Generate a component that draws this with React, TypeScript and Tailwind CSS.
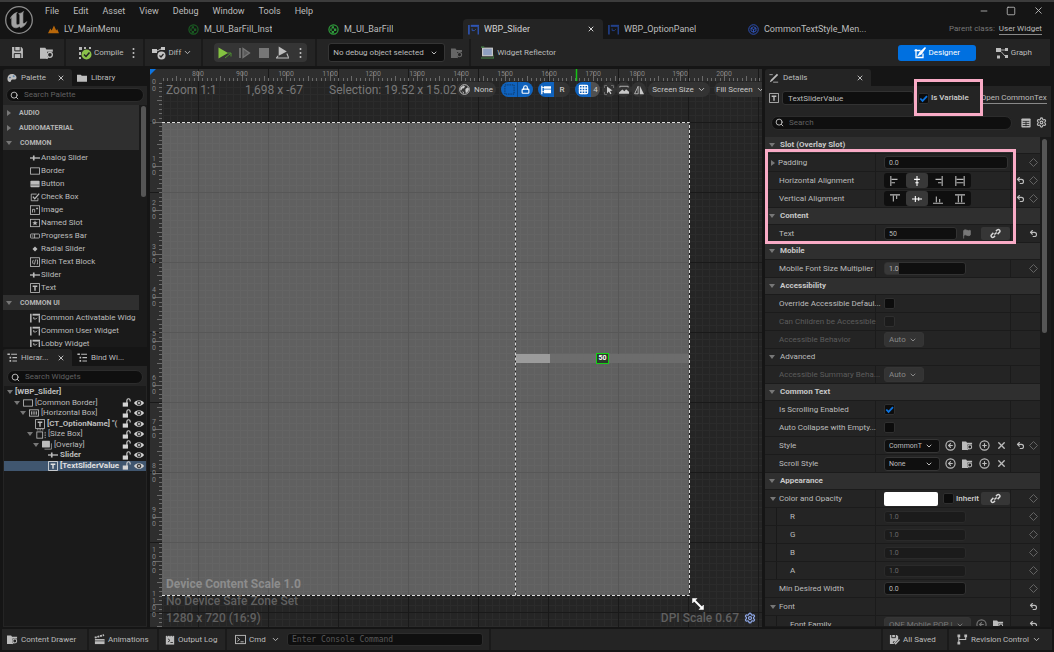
import React, { useState } from 'react';
import {
  ChevronDown,
  CircleArrowLeft,
  CirclePlus,
  Flag,
  Grid3x3,
  Link,
  Lock,
  Minus,
  Search,
  Settings,
  Square,
  Undo2,
  X,
} from 'lucide-react';

interface IconProps {
  className?: string;
  children: React.ReactNode;
}

// Shared 12x12 canvas for the hand-drawn editor icons
function Glyph({ className = 'size-3', children }: IconProps) {
  return (
    <svg viewBox="0 0 12 12" className={`shrink-0 ${className}`} fill="none" stroke="currentColor" aria-hidden="true">
      {children}
    </svg>
  );
}

const glyphs = {
  slider: (
    <>
      <path d="M0 6h12" strokeWidth="1.6" />
      <path d="M4.5 3v6" strokeWidth="2" />
    </>
  ),
  border: <rect x="0.7" y="2.2" width="10.6" height="7.6" />,
  button: (
    <>
      <rect x="0.5" y="2" width="11" height="8" rx="1" fill="currentColor" stroke="none" />
      <path d="M0.5 7.2h11" stroke="#555" />
    </>
  ),
  check: (
    <>
      <path d="M8 2.5H1.5v8h8V7" />
      <path d="M3.5 5.5l2.2 2.7L11 2" strokeWidth="1.6" />
    </>
  ),
  image: (
    <>
      <rect x="0.6" y="0.9" width="10.8" height="10.4" />
      <path d="M3 9V5.2h2.6V9M8.5 3v2.4M7.3 4.2h2.4" />
    </>
  ),
  slot: (
    <>
      <rect x="0.6" y="1.6" width="10.8" height="8.8" />
      <path
        d="M6 2.800l.9 2.200 2.400.1-1.900 1.400.7 2.300L6 7.500 3.900 8.800l.7-2.300-1.900-1.400L5.100 5z"
        fill="currentColor"
        stroke="none"
      />
    </>
  ),
  progress: (
    <>
      <rect x="0.5" y="3.6" width="11" height="4.8" rx="1" />
      <path d="M5.5 3.6v4.8M2 6h2" />
    </>
  ),
  radial: <path d="M6 3L9 6 6 9 3 6z" fill="currentColor" stroke="none" />,
  rich: (
    <>
      <rect x="0.6" y="0.9" width="10.8" height="10.4" />
      <path d="M4 3.5L3 6l1 2.5M6.7 3L5.3 9M8 3.5h1v5H8" />
    </>
  ),
  text: (
    <>
      <rect x="0.7" y="0.7" width="10.6" height="10.6" />
      <path d="M3.2 3.8h5.6M6 3.8v5.4" strokeWidth="1.700" />
    </>
  ),
  widget: (
    <>
      <path d="M1 1v10.500" strokeWidth="1.800" />
      <path d="M3 2H12" strokeWidth="2.200" />
      <path d="M11.200 3v8.500" strokeWidth="1.500" />
      <path d="M4.500 4.800v2.400h2.500l1.500-1.500" />
    </>
  ),
  hbox: (
    <>
      <rect x="0.6" y="2.2" width="10.8" height="7.6" />
      <path d="M3 4v4M5 4v4M7 4v4M9 4v4" />
    </>
  ),
  sizebox: (
    <>
      <rect x="1" y="3.5" width="7" height="7.5" />
      <path d="M1 1h8M11 3.500V11" strokeDasharray="2 1" />
    </>
  ),
  overlay: (
    <>
      <rect x="0" y="1" width="9.5" height="8" rx="0.5" fill="currentColor" stroke="none" />
      <path d="M11.3 4v7H3" strokeWidth="0.8" />
    </>
  ),
  tree: (
    <>
      <path d="M0.5 1.500h3M3 5.500h2M3 9.500h2" strokeWidth="2" />
      <path d="M5 1.500h7M6.500 5.500H12M6.500 9.500H12" strokeWidth="1.300" />
    </>
  ),
  folder: <path d="M0 2h4.500l1.200 1.300H12V10.500H0z" fill="currentColor" stroke="none" />,
  browse: (
    <>
      <path d="M0 1.500h4.500l1 1.500H11v2H6v6H0z" fill="currentColor" stroke="none" />
      <circle cx="8.5" cy="7.6" r="2.1" strokeWidth="1.100" />
      <path d="M7 9.300l-1.300 1.600" strokeWidth="1.300" />
    </>
  ),
  save: (
    <>
      <path d="M1 1h8.500L11 2.500V11H1z" fill="currentColor" stroke="none" />
      <path d="M3.500 1v3.500h5V1M3 11V7h6v4" stroke="#242424" strokeWidth="0.900" />
    </>
  ),
  saved: (
    <>
      <path d="M1 1h7.500L10 2.500V6L7 9 5.500 7.500 4 9l2 2H1z" fill="currentColor" stroke="none" />
      <path d="M3 1v3h4V1" stroke="#242424" />
      <path d="M5.500 8.700l1.800 1.900L11.500 6" strokeWidth="1.400" />
    </>
  ),
  pencil: (
    <>
      <path d="M2 8.500L9.500 1l1.500 1.500L3.500 10 1 11z" fill="currentColor" stroke="none" />
      <path d="M5 11h6M0.500 2h4" />
    </>
  ),
  palette: (
    <>
      <path
        d="M6 1.200C2.800 1.200.5 3.700.5 6.800c0 2.500 1.500 4 3 4 1.800 0 .9-2 2.200-2.700 1.600-.9 5.300.9 5.700-2C11.800 3.200 9 1.200 6 1.200z"
        fill="currentColor"
        stroke="none"
      />
      <circle cx="3.5" cy="5.5" r="1" fill="#3a5f86" stroke="none" />
      <circle cx="8" cy="4" r="1.2" fill="#5d88b0" stroke="none" />
    </>
  ),
  graph: (
    <>
      <path d="M0 1h5v4H0zM9 1h3v3H9zM9 8h3v3H9zM1 8.500h3v3H1z" fill="currentColor" stroke="none" />
      <path d="M5 3h4M5 4.500L9 9" strokeWidth="0.900" />
    </>
  ),
  designer: (
    <>
      <path d="M0.500 3.500h6M2 2v8.500h7V6.500" strokeWidth="1.300" />
      <path d="M3 9.500L5.500 5 11 0l1 1-4.500 6.500z" fill="currentColor" stroke="none" />
    </>
  ),
  mountain: <path d="M0 10L2.500 5l1.500 2L6.500 1.500 9 7l1-1.500L12 10z" fill="currentColor" stroke="none" />,
  material: (
    <>
      <circle cx="6" cy="6" r="5" strokeWidth="1.300" />
      <path d="M4 2.500h2.500V5H4zM6.500 5H9v2.500H6.500zM2.500 5H4v2.500H2.500zM4 7.500h2.500V10H4z" fill="currentColor" stroke="none" />
    </>
  ),
  style: (
    <>
      <circle cx="6" cy="6" r="5.2" />
      <path d="M6 3l2.700 1.400v3.200L6 9 3.300 7.600V4.400zM6 6v3M6 6l2.700-1.500M6 6L3.300 4.500" />
    </>
  ),
  clapper: (
    <>
      <path d="M1 5.500h10.500V11H1z" fill="currentColor" stroke="none" />
      <path d="M0.800 4L11 1.200" strokeWidth="2" strokeDasharray="2.200 0.800" />
      <path d="M1 7.500h10.500" stroke="#242424" strokeWidth="0.700" />
    </>
  ),
  log: (
    <>
      <path d="M1 1h10v10.500H1z" fill="currentColor" stroke="none" />
      <path d="M3.500 4.500L6 6.500l-2.500 2M6.500 9h3" stroke="#242424" />
      <path d="M3 0v2M6 0v2M9 0v2" stroke="#242424" strokeWidth="0.700" />
    </>
  ),
  cmd: (
    <>
      <rect x="0.6" y="1.5" width="10.8" height="9" />
      <path d="M2.500 4L5 6 2.500 8M6 8.500h3.500" />
    </>
  ),
  branch: (
    <>
      <path d="M0.500 0.500h3v3h-3zM0.500 8.500h3v3h-3zM8 0.500h3v3H8z" fill="currentColor" stroke="none" />
      <path d="M2 3v6M9.500 3v3H2" strokeWidth="1.200" />
    </>
  ),
  reflector: (
    <>
      <rect x="1.5" y="2" width="9" height="7" fill="#8f9fc0" stroke="#d0d0d0" />
      <path d="M0 1h3M0 11h12M12 8v3" stroke="#4c8a4c" />
    </>
  ),
  table: (
    <>
      <rect x="0.5" y="0.5" width="11" height="11" rx="1" fill="currentColor" stroke="none" />
      <path d="M2 4h8M2 6.500h8M2 9h8M6 4v6" stroke="#242424" />
    </>
  ),
  mountainFrame: (
    <>
      <path d="M1 3V1.500h10V3" />
      <path d="M0 10.500h12V8L8.500 5 6.500 7.500 4 5.500 0 9z" fill="currentColor" stroke="none" />
    </>
  ),
  mirror: (
    <>
      <path d="M5 1.500V10.500H0.700z" />
      <path d="M7 1v10h5z" fill="currentColor" stroke="none" />
    </>
  ),
  pointer: (
    <>
      <path d="M1.500 4V1.500H4M8 1.500h2.500V4M1.500 8v2.500H4" stroke="#777" strokeWidth="0.800" />
      <path d="M4 2.500l5.500 4-2.500.5 1.500 2.500-1.200.7-1.400-2.600L4 9.500z" fill="currentColor" stroke="none" />
    </>
  ),
  outline: <rect x="1" y="1" width="10" height="10" stroke="#12335a" strokeDasharray="1.500 1" />,
  localize: (
    <>
      <path d="M3.500 1.500H12v3H3.500zM3.500 5.500H12V10H3.500z" fill="currentColor" stroke="none" />
      <path d="M1 1v10" strokeWidth="1.500" />
      <path d="M1 3h3M1 8h3" />
    </>
  ),
  unlocked: (
    <>
      <path d="M1 6h7v5.500H1z" fill="currentColor" stroke="none" />
      <path d="M6.500 6.500V3.200a2.200 2.200 0 0 1 4.400 0v1.600" strokeWidth="1.500" />
    </>
  ),
  eye: (
    <>
      <path d="M0 6C2.500 1.500 9.500 1.500 12 6 9.500 10.500 2.500 10.500 0 6z" fill="currentColor" stroke="none" />
      <circle cx="6" cy="6" r="2.2" fill="#aaa" stroke="#1a1a1a" strokeWidth="1.100" />
    </>
  ),
  globe: (
    <>
      <circle cx="6" cy="6" r="5.3" />
      <path
        d="M2 3.500l3-2 1.500 1-1 2-2 .5L2.500 7 1.200 6zM7 5.500l2.500-2L11 5.500 9.500 8.500 7.500 10 7 7.500zM3.500 8l1.800.7L5 11z"
        fill="currentColor"
        stroke="none"
      />
    </>
  ),
};

type GlyphName = keyof typeof glyphs;

const CARET = 'size-0 shrink-0 border-transparent';

function Caret({ open = true }: { open?: boolean }) {
  return open ? (
    <span className={`${CARET} border-x-[3px] border-t-[4px] border-t-[#777]`} />
  ) : (
    <span className={`${CARET} ml-px border-y-[3px] border-l-[4px] border-l-[#777]`} />
  );
}

function Dots() {
  return (
    <svg viewBox="0 0 3 12" className="h-3 w-[3px]" fill="#c4c4c4" aria-hidden="true">
      <circle cx="1.5" cy="2" r="1" />
      <circle cx="1.5" cy="6" r="1" />
      <circle cx="1.5" cy="10" r="1" />
    </svg>
  );
}

interface CheckProps {
  label: string;
  defaultChecked?: boolean;
  disabled?: boolean;
  showLabel?: boolean;
}

function Check({ label, defaultChecked, disabled, showLabel }: CheckProps) {
  return (
    <label className="flex shrink-0 items-center gap-[2px]">
      <span className="grid">
        <input
          type="checkbox"
          aria-label={label}
          defaultChecked={defaultChecked}
          disabled={disabled}
          className="peer col-start-1 row-start-1 size-[11px] appearance-none rounded-[2px] border border-[#2f2f2f] bg-[#0c0c0c] disabled:bg-[#1b1b1b]"
        />
        <svg
          viewBox="0 0 12 12"
          className="invisible col-start-1 row-start-1 size-[11px] peer-checked:visible"
          fill="none"
          stroke="#0d74e0"
          strokeWidth="2"
          aria-hidden="true"
        >
          <path d="M2.500 6l2.500 2.700L9.800 3.500" />
        </svg>
      </span>
      {showLabel && <span className="font-medium text-[#d0d0d0]">{label}</span>}
    </label>
  );
}

interface DropProps {
  label: string;
  value: string;
  className: string;
  disabled?: boolean;
}

function Drop({ label, value, className, disabled }: DropProps) {
  return (
    <span className={`grid shrink-0 items-center rounded-[3px] border border-[#353535] ${className}`}>
      <select
        aria-label={label}
        disabled={disabled}
        className="col-start-1 row-start-1 w-full appearance-none pl-[4px] whitespace-nowrap outline-none"
      >
        <option>{value}</option>
      </select>
      <ChevronDown className="pointer-events-none col-start-1 row-start-1 mr-[6px] size-2 justify-self-end" strokeWidth={3} />
    </span>
  );
}

function SearchBox({ label, className }: { label: string; className: string }) {
  return (
    <label className={`flex h-[14px] items-center gap-[5px] rounded-full border border-[#2c2c2c] bg-[#0f0f0f] px-[3px] ${className}`}>
      <Search className="size-[9px] shrink-0 text-[#c0c0c0]" strokeWidth={2.5} />
      <input
        type="search"
        aria-label={label}
        placeholder={label}
        className="w-full min-w-0 bg-transparent outline-none placeholder:text-[#606060]"
      />
    </label>
  );
}

const menus = ['File', 'Edit', 'Asset', 'View', 'Debug', 'Window', 'Tools', 'Help'];

const documents: { name: string; icon: GlyphName; color: string; active?: boolean }[] = [
  { name: 'LV_MainMenu', icon: 'mountain', color: 'text-[#b8670a]' },
  { name: 'M_UI_BarFill_Inst', icon: 'material', color: 'text-[#1a5c22]' },
  { name: 'M_UI_BarFill', icon: 'material', color: 'text-[#2f9e3c]' },
  { name: 'WBP_Slider', icon: 'widget', color: 'text-[#2f55b4]', active: true },
  { name: 'WBP_OptionPanel', icon: 'widget', color: 'text-[#22408a]' },
  { name: 'CommonTextStyle_Men...', icon: 'style', color: 'text-[#2f55c4]' },
];

function TitleBar() {
  return (
    <header className="flex h-[39px] shrink-0 border-t-2 border-[#3c3c3c] bg-[#151515] text-[9px]">
      <svg viewBox="0 0 30 30" className="mt-[3px] ml-1 size-[30px] shrink-0" aria-label="Unreal Engine">
        <circle cx="15" cy="15" r="13.3" fill="#101010" stroke="#8c8c8c" strokeWidth="1.300" />
        <path
          d="M6.500 13.500c1-3 3.500-5.300 6.800-6.200-.9.800-1.100 1.400-1.100 2.200v8.300c0 1.500.6 2 1.500 2 .8 0 1.500-.5 2.100-1.100V10c0-.8-.4-1.100-1.200-1.300 2-.3 3.700-1 5-2.200-.6 1-.7 1.600-.7 2.500v8.200c0 1 .5 1.300 1.100 1.300.9 0 1.900-.8 2.700-1.900-.9 3.300-3.200 5.400-6.200 6.200l-1.100-1.500c-1 1-2.200 1.600-3.700 1.500-2.500-.2-4-1.500-4-4v-6c0-.9-.4-1-1.200.7z"
          fill="#a0a0a0"
          stroke="#a0a0a0"
          strokeWidth="0.600"
        />
      </svg>
      <div className="flex min-w-0 flex-1 flex-col pl-[9px]">
        <div className="flex h-[17px] items-center">
          <nav className="flex gap-[14px] pl-[2px]">
            {menus.map((m) => (
              <button key={m}>{m}</button>
            ))}
          </nav>
          <div className="ml-auto flex gap-[17px] pr-[10px]">
            <button aria-label="Minimize">
              <Minus className="size-[10px]" />
            </button>
            <button aria-label="Maximize">
              <Square className="size-[10px]" />
            </button>
            <button aria-label="Close">
              <X className="size-[11px]" />
            </button>
          </div>
        </div>
        <div className="flex min-h-0 flex-1 items-stretch">
          {documents.map((d) => (
            <div
              key={d.name}
              className={`flex w-[140px] shrink items-center rounded-t-[4px] pl-[5px] ${d.active ? 'bg-[#242424] text-[#d4d4d4]' : ''}`}
            >
              <button className="flex min-w-0 items-center gap-[5px]">
                <Glyph className={`size-[11px] ${d.color}`}>{glyphs[d.icon]}</Glyph>
                <span className="truncate">{d.name}</span>
              </button>
              {d.active && (
                <button aria-label="Close tab" className="mr-2 ml-auto">
                  <X className="size-2" strokeWidth={3} />
                </button>
              )}
            </div>
          ))}
          <div className="ml-auto flex shrink-0 items-center gap-1 pr-3 text-[8px]">
            <span className="text-[#777]">Parent class:</span>
            <a href="#parent" className="border-b border-[#888] leading-[10px]">
              User Widget
            </a>
          </div>
        </div>
      </div>
    </header>
  );
}

function Divider() {
  return <span className="h-full w-[2px] shrink-0 bg-[#1a1a1a]" />;
}

function Toolbar() {
  return (
    <div className="mr-1 flex h-[27px] shrink-0 items-center bg-[#242424]">
      <button aria-label="Save" className="ml-[11px]">
        <Glyph className="size-[13px]">{glyphs.save}</Glyph>
      </button>
      <button aria-label="Browse" className="mr-[10px] ml-4">
        <Glyph className="size-[14px]">{glyphs.browse}</Glyph>
      </button>
      <Divider />
      <button className="ml-3 flex items-center gap-[2px]">
        <svg viewBox="0 0 14 14" className="size-[14px]" aria-hidden="true">
          <path d="M1 1h3v3H1zM6 1h2v2H6zM11 1h2v2h-2zM1 6h2v3H1zM1 11h2v2H1z" fill="#b5b5b5" />
          <circle cx="8.5" cy="8.5" r="5" fill="#8bc24a" />
          <path d="M6 8.500l2 2 3.500-4" fill="none" stroke="#242424" strokeWidth="1.500" />
        </svg>
        Compile
      </button>
      <button aria-label="Compile options" className="mr-[8px] ml-[9px]">
        <Dots />
      </button>
      <Divider />
      <button className="mr-[9px] ml-[7px] flex items-center gap-[2px]">
        <svg viewBox="0 0 14 14" className="size-[14px]" fill="#c4c4c4" aria-hidden="true">
          <path d="M0 3h5v4H0zM9 1h4v3H9z" />
          <path d="M5 5l4-2" stroke="#c4c4c4" />
          <circle cx="9.5" cy="9.5" r="4" />
          <path d="M7.500 9.500l1.500 1.500 2.500-3" fill="none" stroke="#242424" strokeWidth="1.200" />
        </svg>
        Diff
        <ChevronDown className="size-[9px]" strokeWidth={2.5} />
      </button>
      <Divider />
      <div className="mr-[8px] ml-[11px] flex h-[19px] shrink-0 items-center rounded-[4px] bg-[#353535] pr-[5px] pl-[4px]">
        <button aria-label="Play">
          <svg viewBox="0 0 14 12" className="h-3 w-[14px]" aria-hidden="true">
            <path d="M0.500 0.500L10 6 0.500 11.500z" fill="#84c341" />
            <path d="M7 11l5.500-4.500M9.500 6h3.500v3.500" fill="none" stroke="#4f9130" />
          </svg>
        </button>
        <button aria-label="Step" className="ml-[7px]">
          <Glyph className="size-3 text-[#777]">
            <path d="M1 1v10" strokeWidth="1.700" />
            <path d="M4 1.500v9l6.500-4.500z" fill="#5a5a5a" strokeWidth="1.300" />
          </Glyph>
        </button>
        <button aria-label="Stop" className="ml-[8px] size-[10px] bg-[#777]" />
        <button aria-label="Eject" className="ml-[7px]">
          <Glyph className="size-[13px] text-[#bdbdbd]">
            <path d="M2.500 0.500L10 5 2.500 9z" fill="currentColor" stroke="none" />
            <path d="M0 11h12M2 9l-1.500 2M10 7l1.500 3.500" />
          </Glyph>
        </button>
        <button aria-label="Play options" className="ml-[10px]">
          <Dots />
        </button>
      </div>
      <Divider />
      <Drop label="Debug object" value="No debug object selected" className="ml-[11px] h-[19px] w-[117px] bg-[#0f0f0f]" />
      <button aria-label="Browse debug object" className="mx-[6px]">
        <Glyph className="size-3 text-[#666]">{glyphs.browse}</Glyph>
      </button>
      <Divider />
      <button className="ml-[10px] flex items-center gap-[3px] whitespace-nowrap">
        <Glyph className="size-[13px]">{glyphs.reflector}</Glyph>
        Widget Reflector
      </button>
      <button className="ml-auto flex h-[16px] w-[78px] shrink-0 items-center justify-center gap-[3px] rounded-[3px] bg-[#0070e0] text-white">
        <Glyph className="size-3">{glyphs.designer}</Glyph>
        Designer
      </button>
      <button className="mr-[18px] ml-5 flex items-center gap-[3px]">
        <Glyph className="size-3">{glyphs.graph}</Glyph>
        Graph
      </button>
    </div>
  );
}

interface PanelTabsProps {
  active: string;
  icon: GlyphName;
  other?: string;
  otherIcon?: GlyphName;
  width: string;
}

function PanelTabs({ active, icon, other, otherIcon, width }: PanelTabsProps) {
  return (
    <div className="flex h-[17px] shrink-0 bg-[#151515]">
      <div className={`flex items-center rounded-t-[3px] bg-[#242424] pl-1 ${width}`}>
        <button className="flex items-center gap-[4px]">
          <Glyph className="size-[10px]">{glyphs[icon]}</Glyph>
          {active}
        </button>
        <button aria-label={`Close ${active}`} className="mr-[7px] ml-auto">
          <X className="size-2" strokeWidth={3} />
        </button>
      </div>
      {other && otherIcon && (
        <button className="ml-[5px] flex items-center gap-[4px]">
          <Glyph className="size-[10px]">{glyphs[otherIcon]}</Glyph>
          {other}
        </button>
      )}
    </div>
  );
}

const commonItems: { name: string; icon: GlyphName }[] = [
  { name: 'Analog Slider', icon: 'slider' },
  { name: 'Border', icon: 'border' },
  { name: 'Button', icon: 'button' },
  { name: 'Check Box', icon: 'check' },
  { name: 'Image', icon: 'image' },
  { name: 'Named Slot', icon: 'slot' },
  { name: 'Progress Bar', icon: 'progress' },
  { name: 'Radial Slider', icon: 'radial' },
  { name: 'Rich Text Block', icon: 'rich' },
  { name: 'Slider', icon: 'slider' },
  { name: 'Text', icon: 'text' },
];

const commonUiItems: { name: string; icon: GlyphName }[] = [
  { name: 'Common Activatable Widg', icon: 'widget' },
  { name: 'Common User Widget', icon: 'widget' },
  { name: 'Lobby Widget', icon: 'widget' },
];

function Category({ name, open }: { name: string; open?: boolean }) {
  return (
    <button className="flex h-[15px] w-full shrink-0 items-center gap-[8px] bg-[#2f2f2f] pl-[3px] text-[7px] font-bold text-[#b4b4b4]">
      <Caret open={open} />
      {name}
    </button>
  );
}

function ItemList({ items }: { items: { name: string; icon: GlyphName }[] }) {
  return (
    <ul className="py-px">
      {items.map((i) => (
        <li key={i.name} className="flex h-[13px] items-center gap-px pl-[27px] whitespace-nowrap">
          <Glyph className="size-[10px]">{glyphs[i.icon]}</Glyph>
          {i.name}
        </li>
      ))}
    </ul>
  );
}

interface TreeRow {
  name: string;
  pad: string;
  icon?: GlyphName;
  leaf?: boolean;
  bold?: boolean;
  selected?: boolean;
}

const tree: TreeRow[] = [
  { name: '[WBP_Slider]', pad: 'pl-[3px]', bold: true },
  { name: '[Common Border]', pad: 'pl-[10px]', icon: 'border' },
  { name: '[Horizontal Box]', pad: 'pl-[16px]', icon: 'hbox' },
  { name: '[CT_OptionName] "(', pad: 'pl-[31px]', icon: 'text', leaf: true, bold: true },
  { name: '[Size Box]', pad: 'pl-[23px]', icon: 'sizebox' },
  { name: '[Overlay]', pad: 'pl-[29px]', icon: 'overlay' },
  { name: 'Slider', pad: 'pl-[44px]', icon: 'slider', leaf: true, bold: true },
  { name: '[TextSliderValue', pad: 'pl-[44px]', icon: 'text', leaf: true, bold: true, selected: true },
];

function LeftPanels() {
  return (
    <aside className="flex w-[144px] shrink-0 flex-col">
      <section className="flex h-[278px] shrink-0 flex-col bg-[#242424]">
        <PanelTabs active="Palette" icon="palette" other="Library" otherIcon="folder" width="w-[69px]" />
        <SearchBox label="Search Palette" className="mx-[3px] my-[2px] shrink-0" />
        <div className="mt-px flex min-h-0 flex-1 bg-[#1a1a1a]">
          <div className="min-w-0 flex-1 overflow-hidden">
            <Category name="AUDIO" open={false} />
            <Category name="AUDIOMATERIAL" open={false} />
            <Category name="COMMON" />
            <ItemList items={commonItems} />
            <Category name="COMMON UI" />
            <ItemList items={commonUiItems} />
          </div>
          <div className="w-[8px] shrink-0 pt-px pl-[2px]">
            <div className="h-[91px] w-[5px] rounded-full bg-[#555]" />
          </div>
        </div>
      </section>
      <section className="mt-[2px] flex min-h-0 flex-1 flex-col bg-[#242424]">
        <PanelTabs active="Hierar..." icon="tree" other="Bind Wi..." otherIcon="tree" width="w-[69px]" />
        <SearchBox label="Search Widgets" className="mx-1 mt-1 mb-[2px] shrink-0" />
        <div className="m-px mt-0 min-h-0 flex-1 bg-[#1a1a1a] pt-px">
          <ul className="flex h-[84px] flex-col">
            {tree.map((r, i) => (
              <li
                key={r.name}
                className={`flex min-h-0 flex-1 items-center pr-[2px] leading-[10px] whitespace-nowrap ${r.pad} ${r.selected ? 'bg-[#40566f] text-[#e0e0e0]' : ''}`}
              >
                {!r.leaf && <Caret />}
                {r.icon && <Glyph className={`size-[10px] ${r.leaf ? '' : 'ml-[3px]'}`}>{glyphs[r.icon]}</Glyph>}
                <span className={`ml-[2px] min-w-0 flex-1 ${r.bold ? 'font-bold' : ''}`}>{r.name}</span>
                {i > 0 && (
                  <>
                    <Glyph className="mr-[3px] size-[9px] text-[#d4d4d4]">{glyphs.unlocked}</Glyph>
                    <Glyph className="size-[10px] text-[#d4d4d4]">{glyphs.eye}</Glyph>
                  </>
                )}
              </li>
            ))}
          </ul>
        </div>
      </section>
    </aside>
  );
}

// Ruler marks are 100 units apart, one grid cell is 70px
const UNIT = 43.85;
const topMarks = Array.from({ length: 13 }, (_, i) => 800 + i * 100);
const sideMarks = Array.from({ length: 13 }, (_, i) => (i - 1) * 100);
const fineTicks = Array.from({ length: 150 }, (_, i) => i);
const tickLength = (i: number) => (i % 10 === 0 ? 9 : i % 5 === 0 ? 5 : 3);

function Canvas() {
  return (
    <svg className="absolute inset-0 size-full" aria-hidden="true">
      <defs>
        <pattern id="minor" width="7" height="7" x="6" y="4" patternUnits="userSpaceOnUse">
          <path d="M0.500 0v7M0 0.500h7" stroke="#2b2b2b" fill="none" />
        </pattern>
        <pattern id="major" width="70" height="70" x="48" y="53" patternUnits="userSpaceOnUse">
          <path d="M0.500 0v70M0 0.500h70" stroke="#191919" fill="none" />
        </pattern>
      </defs>
      <rect width="100%" height="100%" fill="#252525" />
      <rect width="100%" height="100%" fill="url(#minor)" />
      <rect width="100%" height="12" fill="#2e2e2e" />
      <rect width="12" height="100%" fill="#2e2e2e" />
      <rect width="100%" height="100%" fill="url(#major)" />
      <rect x="12" y="53" width="528" height="473" fill="#fff" opacity="0.27" />

      <g stroke="#6a6a6a">
        {fineTicks.map((i) => {
          const x = Math.round(48 + (i - 8) * (UNIT / 10)) + 0.5;
          return x > 12 && <path key={i} d={`M${x} 12v-${tickLength(i + 2)}`} />;
        })}
        {fineTicks.map((i) => {
          const y = Math.round(53 + (i - 9) * (UNIT / 10)) + 0.5;
          return y > 12 && <path key={i} d={`M12 ${y}h-${tickLength(i + 1)}`} />;
        })}
      </g>
      <g fill="#858585" fontSize="7" textAnchor="middle">
        {topMarks.map((m, i) => (
          <text key={m} x={Math.round(48 + i * UNIT)} y="7">
            {m}
          </text>
        ))}
        {sideMarks.map((m, i) => {
          const digits = m < 0 ? ['-', '1', '0', '0'] : String(m).split('');
          const mid = 53 + (i - 1) * UNIT;
          return digits.map((d, k) => {
            const y = Math.round(mid + (k - (digits.length - 1) / 2) * 7 + 2);
            return (
              y > 14 && (
                <text key={`${m}-${k}`} x="4" y={y}>
                  {d}
                </text>
              )
            );
          });
        })}
      </g>
      <path d="M0 0h6L0 6z" fill="#0d74e0" />
      <path d="M426.500 0v12" stroke="#16c416" strokeWidth="1.500" />

      <rect x="366" y="285" width="34" height="9" fill="#9b9b9b" />
      <rect x="400" y="285" width="139" height="9" fill="#6c6c6c" />
      <path d="M12 53.500H539.500V526.500H12M365.500 53.500V526.500" fill="none" stroke="#222" />
      <path d="M12 53.500H539.500V526.500H12M365.500 53.500V526.500" fill="none" stroke="#dcdcdc" strokeDasharray="3 2" />
      <g fill="#fff" stroke="#fff">
        <path d="M544 531l8 8" strokeWidth="2" />
        <path d="M542.500 529.500h4.500l-4.500 4.500zM553.500 540.500h-4.500l4.500-4.500z" strokeWidth="0.500" />
      </g>
    </svg>
  );
}

const pill = 'flex h-[15px] shrink-0 items-center overflow-hidden rounded-full bg-[#333] text-[#c8c8c8]';
const blueCell = 'grid h-full place-items-center bg-[#0f62bd] text-white';

function Viewport() {
  return (
    <main className="relative flex min-w-0 flex-1 flex-col overflow-hidden">
      <Canvas />
      <span className="absolute top-[284px] left-[446px] grid h-[11px] w-[13px] place-items-center border border-[#14d214] bg-[#2c3a2c] text-[7px] leading-none font-bold text-white">
        50
      </span>
      <div className="relative flex items-center pt-[13px] pl-4 whitespace-nowrap">
        <span className="w-[79px] shrink-0 text-[12px] text-[#787878]">Zoom 1:1</span>
        <span className="w-[84px] shrink-0 text-[12px] text-[#787878]">1,698 x -67</span>
        <span className="w-[128px] shrink-0 text-[12px] text-[#787878]">Selection: 19.52 x 15.02</span>
        <div className={`${pill} w-[39px]`}>
          <button className="flex items-center gap-[4px] pl-[2px]">
            <Glyph className="size-[11px]">{glyphs.globe}</Glyph>
            None
          </button>
        </div>
        <div className={`${pill} ml-[5px] w-[32px]`}>
          <button aria-label="Show outlines" className={`${blueCell} w-4`}>
            <Glyph className="size-[11px]">{glyphs.outline}</Glyph>
          </button>
          <button aria-label="Respect locks" className={`${blueCell} flex-1 border-l border-[#0b4687]`}>
            <Lock className="size-[9px]" strokeWidth={3} />
          </button>
        </div>
        <div className={`${pill} ml-[5px] w-[32px]`}>
          <button aria-label="Localization preview" className={`${blueCell} w-4`}>
            <Glyph className="size-[10px]">{glyphs.localize}</Glyph>
          </button>
          <button className="flex-1 font-medium">R</button>
        </div>
        <div className={`${pill} ml-[5px] w-[25px]`}>
          <button aria-label="Grid snap" className={`${blueCell} w-4`}>
            <Grid3x3 className="size-[11px]" strokeWidth={2.5} />
          </button>
          <button className="h-full flex-1 bg-[#505050]">4</button>
        </div>
        <button aria-label="Select" className={`${pill} ml-[2px] w-[14px] justify-center`}>
          <Glyph>{glyphs.pointer}</Glyph>
        </button>
        <button aria-label="Preview background" className={`${pill} w-[15px] justify-center text-[#777]`}>
          <Glyph className="size-[10px]">{glyphs.mountainFrame}</Glyph>
        </button>
        <button aria-label="Flip layout" className={`${pill} w-[15px] justify-center text-[#777]`}>
          <Glyph className="size-[10px]">{glyphs.mirror}</Glyph>
        </button>
        <button className={`${pill} ml-[2px] w-[62px] justify-center gap-[3px]`}>
          Screen Size
          <ChevronDown className="size-[9px]" strokeWidth={2.5} />
        </button>
        <button className={`${pill} ml-1 w-[64px] gap-[3px] pl-[2px]`}>
          Fill Screen
          <ChevronDown className="size-[9px]" strokeWidth={2.5} />
        </button>
      </div>
      <div className="relative mt-auto flex items-end pr-[6px] pl-4 text-[12px] leading-[17px] font-medium text-[#606060]">
        <div>
          <p className="font-bold text-[#8c8c8c]">Device Content Scale 1.0</p>
          <p>No Device Safe Zone Set</p>
          <p>1280 x 720 (16:9)</p>
        </div>
        <p className="ml-auto">DPI Scale 0.67</p>
        <button aria-label="DPI settings" className="mb-[3px] ml-[5px]">
          <Settings className="size-3 text-[#8fa8e8]" strokeWidth={2.5} />
        </button>
      </div>
    </main>
  );
}

const FIELD = 'h-[13px] min-w-0 rounded-[3px] border border-[#323232] bg-[#0f0f0f] px-1 text-[7px] text-[#b8b8b8] outline-none';

interface PropProps {
  label: string;
  name?: string;
  dim?: boolean;
  caret?: 'open' | 'closed';
  nested?: boolean;
  undo?: boolean;
  bind?: boolean;
  children?: React.ReactNode;
}

function Prop({ label, dim, caret, nested, undo, bind, children }: PropProps) {
  return (
    <div className="flex h-[18px] shrink-0 border-b border-[#1b1b1b] bg-[#242424]">
      <div
        className={`flex w-[111px] shrink-0 items-center gap-[3px] border-r border-[#1b1b1b] whitespace-nowrap ${nested ? 'pl-[11px]' : caret ? 'pl-[5px]' : 'pl-[14px]'}`}
      >
        {nested && <span className="mr-[10px] h-full w-px bg-[#191919]" />}
        {caret && <Caret open={caret === 'open'} />}
        <span className={dim ? 'text-[#5c5c5c]' : ''}>{label}</span>
      </div>
      <div className="flex min-w-0 flex-1 items-center border-r border-[#1b1b1b] pl-[8px]">{children}</div>
      <div className="flex w-[29px] shrink-0 items-center justify-end gap-1 pr-[2px]">
        {undo && (
          <button aria-label={`Reset ${label}`}>
            <Undo2 className="size-[9px]" strokeWidth={3} />
          </button>
        )}
        {bind && (
          <button aria-label={`Keyframe ${label}`}>
            <Glyph className="size-[9px] text-[#666]">
              <path d="M6 0.700L11.300 6 6 11.300 0.700 6z" strokeWidth="1.300" />
            </Glyph>
          </button>
        )}
      </div>
    </div>
  );
}

function Group({ name, plain }: { name: string; plain?: boolean }) {
  return (
    <button
      className={`flex h-[17px] w-full shrink-0 items-center gap-[5px] border-b border-[#1b1b1b] pl-[4px] ${plain ? 'bg-[#242424]' : 'bg-[#2f2f2f] font-bold text-[#c8c8c8]'}`}
    >
      <Caret />
      {name}
    </button>
  );
}

const hAlign = [
  { name: 'Left', path: 'M1 0v12M2 4h7M2 8h4' },
  { name: 'Center', path: 'M6 0v12M2.500 4h7M4 8h4' },
  { name: 'Right', path: 'M11 0v12M3 4h7M6 8h4' },
  { name: 'Fill', path: 'M1 0v12M11 0v12M2 4h8M2 8h8' },
];

const vAlign = [
  { name: 'Top', path: 'M0 1h12M4 2v7M8 2v4' },
  { name: 'Middle', path: 'M0 6h12M4 2.500v7M8 4v4' },
  { name: 'Bottom', path: 'M0 11h12M4 3v7M8 6v4' },
  { name: 'Stretch', path: 'M0 1h12M0 11h12M4 2v8M8 2v8' },
];

function AlignPicker({ options, initial }: { options: { name: string; path: string }[]; initial: number }) {
  const [picked, setPicked] = useState(initial);
  return (
    <div className="flex h-[15px] w-[87px] rounded-[3px] bg-[#0f0f0f]">
      {options.map((o, i) => (
        <button
          key={o.name}
          aria-label={o.name}
          aria-pressed={picked === i}
          onClick={() => setPicked(i)}
          className={`grid flex-1 place-items-center rounded-[3px] ${picked === i ? 'bg-[#383838] text-white' : ''}`}
        >
          <Glyph className="size-[10px]">
            <path d={o.path} strokeWidth="1.300" />
          </Glyph>
        </button>
      ))}
    </div>
  );
}

function BindButton() {
  return (
    <button
      aria-label="Bind"
      className="ml-auto grid h-[13px] w-[29px] shrink-0 place-items-center rounded-[2px] bg-[#363636] text-[#d8d8d8]"
    >
      <Glyph className="size-[11px]">
        <path d="M6.500 3.500L8 2a1.800 1.800 0 0 1 2.500 2.500L8.300 6.700M5.500 8.500L4 10a1.800 1.800 0 0 1-2.500-2.500L3.700 5.300M4.800 7.200l2.400-2.400" strokeWidth="1.600" />
      </Glyph>
    </button>
  );
}

function AssetButtons() {
  return (
    <div className="ml-[5px] flex items-center gap-[6px]">
      <button aria-label="Use selected asset">
        <CircleArrowLeft className="size-[11px]" strokeWidth={2.5} />
      </button>
      <button aria-label="Browse to asset">
        <Glyph className="size-[11px]">{glyphs.browse}</Glyph>
      </button>
      <button aria-label="Create asset">
        <CirclePlus className="size-[11px]" strokeWidth={2.5} />
      </button>
      <button aria-label="Clear">
        <X className="size-[11px]" strokeWidth={3} />
      </button>
    </div>
  );
}

function Details() {
  return (
    <aside className="relative flex w-[286px] shrink-0 flex-col overflow-hidden bg-[#242424]">
      <PanelTabs active="Details" icon="pencil" width="w-[106px]" />
      <div className="flex h-6 shrink-0 items-center overflow-hidden pl-[4px] whitespace-nowrap">
        <Glyph className="mr-[3px] size-[10px]">{glyphs.text}</Glyph>
        <input
          aria-label="Widget name"
          defaultValue="TextSliderValue"
          className="mr-1 h-[14px] w-[132px] shrink-0 rounded-[3px] border border-[#323232] bg-[#0f0f0f] px-[5px] outline-none"
        />
        <Check label="Is Variable" defaultChecked showLabel />
        <a href="#text" className="ml-3 shrink-0 border-b border-[#888] leading-[10px]">
          Open CommonTex
        </a>
      </div>
      <div className="flex h-[27px] shrink-0 items-center pr-1 pb-[2px] pl-[6px]">
        <SearchBox label="Search" className="mr-[9px] flex-1" />
        <button aria-label="Property matrix" className="mr-[5px]">
          <Glyph className="size-[10px]">{glyphs.table}</Glyph>
        </button>
        <button aria-label="View options">
          <Settings className="size-[11px]" strokeWidth={2.5} />
        </button>
      </div>
      <div className="flex min-h-0 flex-1 border-b border-[#1a1a1a] bg-[#1a1a1a]">
        <div className="flex min-w-0 flex-1 flex-col overflow-hidden">
          <Group name="Slot (Overlay Slot)" />
          <Prop label="Padding" caret="closed" bind>
            <input aria-label="Padding" defaultValue="0.0" className={`${FIELD} mr-[2px] flex-1`} />
          </Prop>
          <Prop label="Horizontal Alignment" undo bind>
            <AlignPicker options={hAlign} initial={1} />
          </Prop>
          <Prop label="Vertical Alignment" undo bind>
            <AlignPicker options={vAlign} initial={1} />
          </Prop>
          <Group name="Content" />
          <Prop label="Text" undo>
            <input aria-label="Text" defaultValue="50" className={`${FIELD} w-[73px]`} />
            <button aria-label="Localize" className="ml-[5px]">
              <Flag className="size-[10px] fill-[#777] text-[#777]" />
            </button>
            <BindButton />
          </Prop>
          <Group name="Mobile" />
          <Prop label="Mobile Font Size Multiplier" bind>
            <input
              aria-label="Mobile Font Size Multiplier"
              defaultValue="1.0"
              className={`${FIELD} w-[82px] bg-linear-to-r from-[#383838] from-[14px] to-[#0f0f0f] to-[14px]`}
            />
          </Prop>
          <Group name="Accessibility" />
          <Prop label="Override Accessible Defaul...">
            <Check label="Override Accessible Defaults" />
          </Prop>
          <Prop label="Can Children be Accessible" dim>
            <Check label="Can Children be Accessible" disabled />
          </Prop>
          <Prop label="Accessible Behavior" dim>
            <Drop label="Accessible Behavior" value="Auto" className="h-[15px] w-[40px] bg-[#333] text-[#888]" disabled />
          </Prop>
          <Group name="Advanced" plain />
          <Prop label="Accessible Summary Beha..." dim>
            <Drop label="Accessible Summary Behavior" value="Auto" className="h-[15px] w-[40px] bg-[#333] text-[#888]" disabled />
          </Prop>
          <Group name="Common Text" />
          <Prop label="Is Scrolling Enabled">
            <Check label="Is Scrolling Enabled" defaultChecked />
          </Prop>
          <Prop label="Auto Collapse with Empty...">
            <Check label="Auto Collapse with Empty Text" />
          </Prop>
          <Prop label="Style" undo bind>
            <Drop label="Style" value="CommonT" className="h-[14px] w-[56px] bg-[#0f0f0f] text-[7px]" />
            <AssetButtons />
          </Prop>
          <Prop label="Scroll Style">
            <Drop label="Scroll Style" value="None" className="h-[14px] w-[56px] bg-[#0f0f0f] text-[7px]" />
            <AssetButtons />
          </Prop>
          <Group name="Appearance" />
          <Prop label="Color and Opacity" caret="open" bind>
            <button aria-label="Pick color" className="mr-[5px] h-[14px] w-[54px] shrink-0 rounded-[2px] bg-white" />
            <Check label="Inherit" showLabel />
            <BindButton />
          </Prop>
          {['R', 'G', 'B', 'A'].map((c) => (
            <Prop key={c} label={c} nested bind>
              <input
                aria-label={c}
                defaultValue="1.0"
                disabled
                className="h-[12px] w-[82px] rounded-[3px] border border-[#2a2a2a] bg-[#1b1b1b] px-1 text-[7px] text-[#6a6a6a]"
              />
            </Prop>
          ))}
          <Prop label="Min Desired Width" bind>
            <input aria-label="Min Desired Width" defaultValue="0.0" className={`${FIELD} w-[82px]`} />
          </Prop>
          <Prop label="Font" caret="open" undo />
          <Prop label="Font Family" nested undo>
            <Drop label="Font Family" value="ONE Mobile POP |" className="h-[15px] w-[87px] bg-[#333] text-[#777]" disabled />
            <div className="ml-[5px] flex items-center gap-[6px]">
              <CircleArrowLeft className="size-[11px] text-[#777]" strokeWidth={2.5} />
              <Glyph className="size-[11px]">{glyphs.browse}</Glyph>
            </div>
          </Prop>
        </div>
        <div className="w-[11px] shrink-0 pt-[2px] pl-[2px]">
          <div className="h-[194px] w-[5px] rounded-full bg-[#555]" />
        </div>
      </div>
      {/* Callouts */}
      <div className="pointer-events-none absolute top-[10px] left-[149px] h-[37px] w-[69px] border-3 border-[#f9abc6]" />
      <div className="pointer-events-none absolute top-[80px] left-0 h-[95px] w-[251px] border-3 border-[#f9abc6]" />
    </aside>
  );
}

function StatusBar() {
  return (
    <footer className="mx-[2px] mb-[2px] flex h-[21px] shrink-0 items-center bg-[#242424] whitespace-nowrap">
      <button className="flex w-[85px] items-center gap-[3px] pl-[5px]">
        <Glyph className="size-[11px]">{glyphs.browse}</Glyph>
        Content Drawer
      </button>
      <Divider />
      <button className="flex w-[68px] items-center gap-[3px] pl-[5px]">
        <Glyph className="size-[11px]">{glyphs.clapper}</Glyph>
        Animations
      </button>
      <Divider />
      <button className="flex w-[66px] items-center gap-[3px] pl-[6px]">
        <Glyph className="size-[10px]">{glyphs.log}</Glyph>
        Output Log
      </button>
      <Divider />
      <button className="flex w-[60px] items-center gap-[3px] pl-[8px]">
        <Glyph className="size-[11px]">{glyphs.cmd}</Glyph>
        Cmd
        <ChevronDown className="ml-[2px] size-[9px]" strokeWidth={2.5} />
      </button>
      <input
        aria-label="Console command"
        placeholder="Enter Console Command"
        className="mr-[6px] h-[13px] w-[196px] rounded-[3px] border border-[#2c2c2c] bg-[#0f0f0f] px-1 font-['DejaVu_Sans_Mono',monospace] outline-none placeholder:text-[#585858]"
      />
      <Divider />
      <div className="ml-auto flex h-full items-center pr-[11px]">
        <Divider />
        <button className="flex w-[64px] items-center gap-[3px] pl-[6px]">
          <Glyph className="size-[11px]">{glyphs.saved}</Glyph>
          All Saved
        </button>
        <Divider />
        <button className="flex items-center gap-[3px] pl-[8px]">
          <Glyph className="size-[11px]">{glyphs.branch}</Glyph>
          Revision Control
          <ChevronDown className="size-[9px]" strokeWidth={2.5} />
        </button>
      </div>
    </footer>
  );
}

export default function App() {
  return (
    <div className="flex h-screen flex-col overflow-hidden bg-[#151515] font-[Roboto,sans-serif] text-[8px] leading-[12px] text-[#bcbcbc]">
      <TitleBar />
      <Toolbar />
      <div className="flex min-h-0 flex-1 gap-[3px] pt-[3px] pr-[3px] pb-[2px] pl-[3px]">
        <LeftPanels />
        <Viewport />
        <Details />
      </div>
      <StatusBar />
    </div>
  );
}
